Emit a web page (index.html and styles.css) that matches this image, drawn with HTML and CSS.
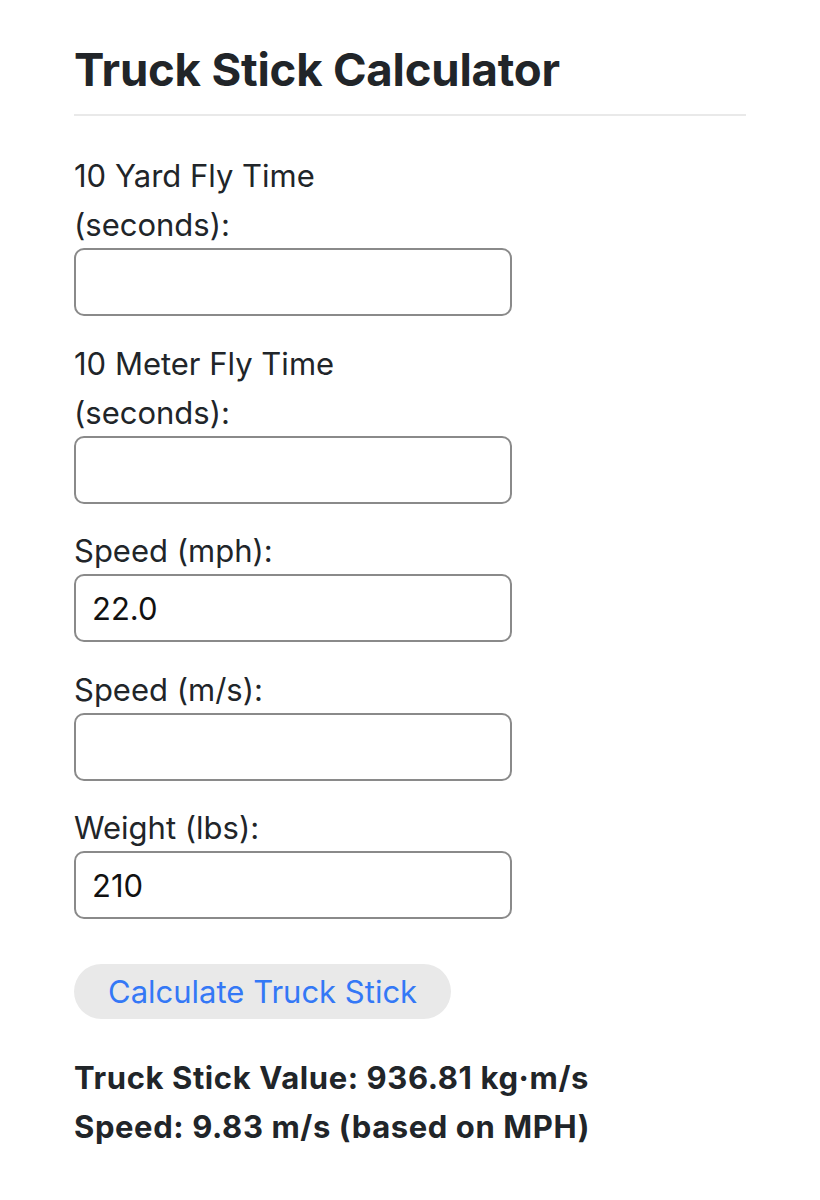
FILE: index.html
```html
<!DOCTYPE html>
<html lang="en">
<head>
    <meta charset="UTF-8">
    <meta name="viewport" content="width=device-width, initial-scale=1.0">
    <title>Truck Stick Calculator</title>
    <link rel="stylesheet" href="styles.css">
</head>
<body>
    <div class="container">
        <h1 class="title">Truck Stick Calculator</h1>

        <div class="input-group">
            <label for="yardTime">10 Yard Fly Time (seconds):</label>
            <input type="text" id="yardTime" class="input-field">
        </div>

        <div class="input-group">
            <label for="meterTime">10 Meter Fly Time (seconds):</label>
            <input type="text" id="meterTime" class="input-field">
        </div>

        <div class="input-group">
            <label for="speedMph">Speed (mph):</label>
            <input type="text" id="speedMph" class="input-field" value="22.0">
        </div>

        <div class="input-group">
            <label for="speedMs">Speed (m/s):</label>
            <input type="text" id="speedMs" class="input-field">
        </div>

        <div class="input-group">
            <label for="weight">Weight (lbs):</label>
            <input type="text" id="weight" class="input-field" value="210">
        </div>

        <button class="calc-btn">Calculate Truck Stick</button>

        <div class="result">
            <div>Truck Stick Value: 936.81 kg·m/s</div>
            <div>Speed: 9.83 m/s (based on MPH)</div>
        </div>
    </div>
</body>
</html>
```

FILE: styles.css
```css
* {
    margin: 0;
    padding: 0;
    box-sizing: border-box;
    font-family: Inter, 'Noto Sans', sans-serif;
}

body {
    background: #ffffff;
    color: #212529;
}

.container {
    width: 672px;
    margin-left: 74px;
    padding-top: 38px;
}

.title {
    font-size: 45.5px;
    font-weight: 700;
    line-height: 64px;
    padding-bottom: 12px;
    border-bottom: 2px solid #e9e9e9;
    margin-bottom: 35px;
    letter-spacing: -0.2px;
}

.input-group {
    margin-bottom: 22.5px;
}

.input-group label {
    display: block;
    max-width: 330px;
    font-size: 31px;
    line-height: 49px;
}

.input-field {
    display: block;
    width: 438px;
    height: 68px;
    margin-top: -1px;
    border: 2px solid #8a8a8a;
    border-radius: 10px;
    padding: 0 16px;
    font-size: 31px;
    color: #111;
    outline: none;
}

.calc-btn {
    display: block;
    margin-top: 45px;
    height: 55px;
    padding: 0 34px;
    border: none;
    border-radius: 28px;
    background: #e9e9e9;
    color: #3478f6;
    font-size: 31px;
}

.result {
    margin-top: 34px;
    font-size: 31px;
    font-weight: 700;
    letter-spacing: 0.6px;
    line-height: 49px;
}
```
